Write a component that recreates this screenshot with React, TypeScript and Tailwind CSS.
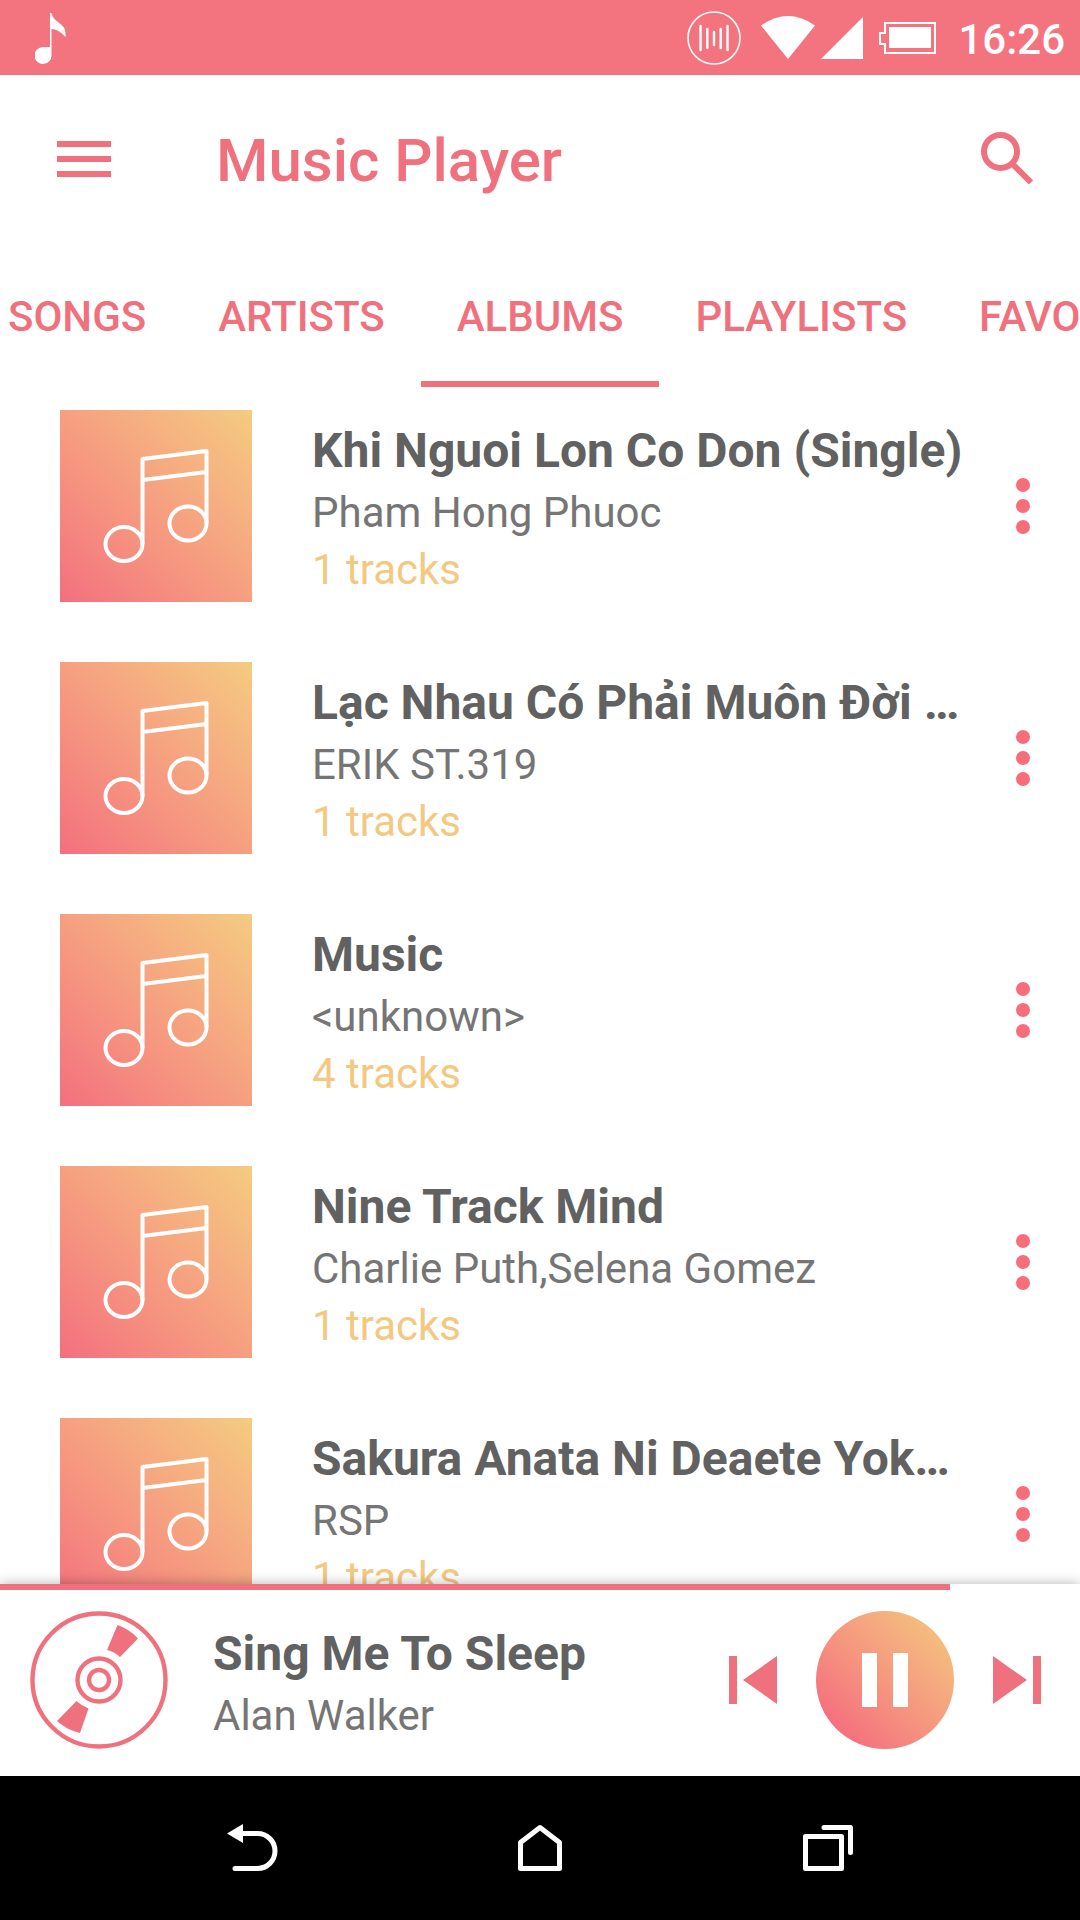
import { useState } from "react";

type Album = {
    title: string;
    artist: string;
    tracks: number;
};

const albums: Album[] = [
    { title: "Khi Nguoi Lon Co Don (Single)", artist: "Pham Hong Phuoc", tracks: 1 },
    { title: "Lạc Nhau Có Phải Muôn Đời …", artist: "ERIK ST.319", tracks: 1 },
    { title: "Music", artist: "<unknown>", tracks: 4 },
    { title: "Nine Track Mind", artist: "Charlie Puth,Selena Gomez", tracks: 1 },
    { title: "Sakura Anata Ni Deaete Yok…", artist: "RSP", tracks: 1 },
];

const tabs = ["SONGS", "ARTISTS", "ALBUMS", "PLAYLISTS", "FAVORITES"];

const StatusBar = () => {
    return (
        <div className="flex h-[75px] shrink-0 items-center bg-[#f3737e] pr-[15px] pl-[35px] text-white">
            <svg width="32" height="54" viewBox="0 0 32 54" fill="currentColor" className="mr-auto">
                <path d="M15 2h1.500c2 10 14 10 14 20v4c-4-4-8-8-14-8v26a8.500 8.500 0 1 1-8.500-8h7z" />
            </svg>
            <svg width="54" height="54" viewBox="0 0 54 54" fill="none" stroke="currentColor" strokeLinecap="round">
                <circle cx="27" cy="27" r="26" strokeWidth="1.600" />
                <path d="M13.500 15v24M20.300 18v19M27 21v13M33.700 18v19M40.500 15v24" strokeWidth="2.400" />
            </svg>
            <svg width="54" height="43" viewBox="0 0 54 43" fill="currentColor" className="ml-5">
                <path d="M0 9.500Q27-9.500 54 9.500L27 43z" />
            </svg>
            <svg width="42" height="42" viewBox="0 0 42 42" fill="currentColor" className="ml-1.5">
                <path d="M42 0v42H0z" />
            </svg>
            <svg width="57" height="32" viewBox="0 0 57 32" className="ml-4">
                <path d="M6 1h50v30H6v-9H1V11h5z" fill="none" stroke="currentColor" strokeWidth="2" />
                <path d="M10 5h42v21H10z" fill="currentColor" />
            </svg>
            <span className="ml-[22px] pt-1 text-[42px] leading-[48px] font-medium">16:26</span>
        </div>
    );
};

const AlbumArt = () => {
    return (
        <div className="size-[192px] shrink-0 bg-linear-to-tr from-[#f36f7e] to-[#f4cb80]">
            <svg viewBox="0 0 192 192" fill="none" stroke="white" strokeWidth="4" strokeLinejoin="round">
                <ellipse cx="64" cy="134" rx="18.500" ry="17" />
                <ellipse cx="128" cy="113.500" rx="18.500" ry="17" />
                <path d="M82.500 134V49L146.500 41v72M82.500 70l64-8" />
            </svg>
        </div>
    );
};

const AlbumRow = ({ album }: { album: Album }) => {
    return (
        <li className="flex items-center pr-[39px] pl-[60px]">
            <AlbumArt />
            <div className="ml-[60px] min-w-0 flex-1 pt-1">
                <h2 className="truncate text-[48px] leading-[66px] font-bold text-[#616161]">{album.title}</h2>
                <p className="truncate text-[42px] leading-[57px] text-[#757575]">{album.artist}</p>
                <p className="text-[42px] leading-[57px] text-[#f3c982]">{album.tracks} tracks</p>
            </div>
            <button aria-label={`Options for ${album.title}`} className="ml-2 flex w-9 shrink-0 justify-center">
                <svg width="14" height="56" viewBox="0 0 14 56" fill="#f76d7a">
                    <circle cx="7" cy="7" r="7" />
                    <circle cx="7" cy="28" r="7" />
                    <circle cx="7" cy="49" r="7" />
                </svg>
            </button>
        </li>
    );
};

const PlayerBar = () => {
    const [playing, setPlaying] = useState(true);
    const progress = 88;

    return (
        <footer className="relative flex h-[192px] shrink-0 items-center bg-white pr-[39px] pl-[30px] text-[#f0717e] shadow-[0_0_12px_rgba(0,0,0,0.3)]">
            <div className="absolute inset-x-0 top-0 h-1.5 bg-white">
                <div className="h-full bg-[#f0717e]" style={{ width: `${progress}%` }} />
            </div>
            <svg width="138" height="138" viewBox="0 0 138 138" fill="none" stroke="currentColor" strokeWidth="4.400" className="shrink-0">
                <circle cx="69" cy="69" r="66.500" />
                <circle cx="69" cy="69" r="21.500" />
                <circle cx="69" cy="69" r="10" />
                <path d="M87.500 14q12 4 20.500 13.500L90 46q-5-5-13-7zM50 122q-13-3-23-12L46.500 90q5 5 12 7.500z" fill="currentColor" stroke="none" />
            </svg>
            <div className="ml-[45px] min-w-0 flex-1 pt-1">
                <h2 className="truncate text-[48px] leading-[66px] font-bold text-[#616161]">Sing Me To Sleep</h2>
                <p className="truncate text-[42px] leading-[57px] text-[#757575]">Alan Walker</p>
            </div>
            <div className="flex shrink-0 items-center gap-[39px]">
                <button aria-label="Previous">
                    <svg width="48" height="48" viewBox="0 0 48 48" fill="currentColor">
                        <path d="M0 0h8v48H0zM48 0v48L14 24z" />
                    </svg>
                </button>
                <button
                    aria-label={playing ? "Pause" : "Play"}
                    onClick={() => setPlaying(!playing)}
                    className="flex size-[138px] items-center justify-center rounded-full bg-linear-to-tr from-[#f4707e] from-15% to-[#f3c17f] to-90% text-white"
                >
                    <svg width="46" height="54" viewBox="0 0 46 54" fill="currentColor">
                        {playing ? <path d="M0 0h15v54H0zM31 0h15v54H31z" /> : <path d="M4 0l42 27L4 54z" />}
                    </svg>
                </button>
                <button aria-label="Next">
                    <svg width="48" height="48" viewBox="0 0 48 48" fill="currentColor">
                        <path d="M40 0h8v48h-8zM0 0v48l34-24z" />
                    </svg>
                </button>
            </div>
        </footer>
    );
};

const NavigationBar = () => {
    return (
        <nav className="grid h-36 shrink-0 grid-cols-3 place-items-center bg-black px-[10%] text-white">
            <button aria-label="Back">
                <svg width="52" height="48" viewBox="0 0 52 48" fill="none" stroke="currentColor" strokeWidth="5" strokeLinecap="round">
                    <path d="M14 9.500h17.500a17.500 17.500 0 0 1 0 35H9" />
                    <path d="M1 9.500L17 0v19z" fill="currentColor" stroke="none" />
                </svg>
            </button>
            <button aria-label="Home">
                <svg width="44" height="48" viewBox="0 0 44 48" fill="none" stroke="currentColor" strokeWidth="5" strokeLinejoin="round">
                    <path d="M2.500 44.500v-26L22 3.500l19.500 15v26z" />
                </svg>
            </button>
            <button aria-label="Recent apps">
                <svg width="50" height="48" viewBox="0 0 50 48" fill="none" stroke="currentColor" strokeWidth="5" strokeLinecap="round" strokeLinejoin="round">
                    <path d="M2.500 12.500h36v32h-36zM21 3.500h26.500v25" />
                </svg>
            </button>
        </nav>
    );
};

export default function App() {
    const [activeTab, setActiveTab] = useState("ALBUMS");

    return (
        <div className="flex h-screen flex-col overflow-hidden bg-white font-['Roboto',sans-serif]">
            <StatusBar />
            <header className="flex h-[168px] shrink-0 items-center pr-[47px] pl-[57px] text-[#f0717e]">
                <button aria-label="Open menu">
                    <svg width="54" height="36" viewBox="0 0 54 36" fill="currentColor">
                        <path d="M0 0h54v6H0zM0 15h54v6H0zM0 30h54v6H0z" />
                    </svg>
                </button>
                <h1 className="ml-[105px] flex-1 pt-1 text-[60px] leading-[72px] font-medium">Music Player</h1>
                <button aria-label="Search">
                    <svg width="52" height="54" viewBox="0 0 52 54" fill="none" stroke="currentColor" strokeWidth="6">
                        <circle cx="19.500" cy="19.500" r="16.500" />
                        <path d="M32.500 33L50 50.500" />
                    </svg>
                </button>
            </header>
            <div role="tablist" className="-ml-7 flex h-36 shrink-0 overflow-hidden">
                {tabs.map((tab) => (
                    <button
                        key={tab}
                        role="tab"
                        aria-selected={tab === activeTab}
                        onClick={() => setActiveTab(tab)}
                        className={`shrink-0 border-y-[6px] border-t-transparent px-9 pt-0.5 text-[42px] font-medium text-[#f0717e] ${tab === activeTab ? "border-b-[#f0717e]" : "border-b-transparent"}`}
                    >
                        {tab}
                    </button>
                ))}
            </div>
            <main className="min-h-0 flex-1 overflow-hidden">
                <ul className="flex flex-col gap-[60px] pt-[23px]">
                    {albums.map((album) => (
                        <AlbumRow key={album.title} album={album} />
                    ))}
                </ul>
            </main>
            <PlayerBar />
            <NavigationBar />
        </div>
    );
}
